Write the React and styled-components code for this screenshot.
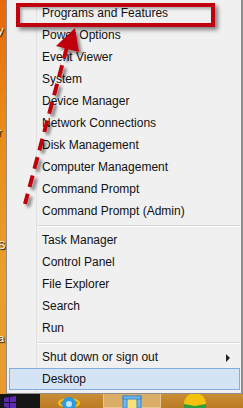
import React from "react";
import styled, { createGlobalStyle } from "styled-components";

const GlobalStyle = createGlobalStyle`
  html, body {
    margin: 0;
    padding: 0;
    background: #c88a2e;
  }
  * {
    box-sizing: border-box;
  }
`;

const groups = [
  [
    "Programs and Features",
    "Power Options",
    "Event Viewer",
    "System",
    "Device Manager",
    "Network Connections",
    "Disk Management",
    "Computer Management",
    "Command Prompt",
    "Command Prompt (Admin)",
  ],
  ["Task Manager", "Control Panel", "File Explorer", "Search", "Run"],
];

export default function App() {
  return (
    <>
      <GlobalStyle />
      <Screen>
        <Desk>
          <Wallpaper>
            <Label style={{ top: 24 }}>y</Label>
            <Label style={{ top: 126 }}>r</Label>
            <Label style={{ top: 239 }}>S</Label>
            <Label style={{ top: 332 }}>a</Label>
          </Wallpaper>
          <Menu>
            {groups.map((items, gi) => (
              <React.Fragment key={gi}>
                {items.map((item) => (
                  <Item key={item}>{item}</Item>
                ))}
                <Separator />
              </React.Fragment>
            ))}
            <Item>
              Shut down or sign out
              <SubArrow />
            </Item>
            <Item $active>Desktop</Item>
          </Menu>
          <Highlight />
          <Annotation width="243" height="394" viewBox="0 0 243 394">
            <defs>
              <filter id="shadow" x="-20%" y="-20%" width="140%" height="140%">
                <feDropShadow dx="3" dy="3" stdDeviation="1.6" floodColor="#000" floodOpacity="0.45" />
              </filter>
            </defs>
            <g filter="url(#shadow)" fill="#c0000f" stroke="#c0000f">
              <line
                x1="67"
                y1="47"
                x2="25"
                y2="204"
                strokeWidth="4"
                strokeDasharray="12 7"
                fill="none"
              />
              <polygon points="75,28 56,46 79,52" stroke="none" />
            </g>
          </Annotation>
        </Desk>
        <Taskbar>
          <StartTile>
            <svg width="14" height="14" viewBox="0 0 14 14">
              <path d="M2 3 L7 2 L7 7 L2 7 Z M8 2 L14 1 L14 7 L8 7 Z M2 8 L7 8 L7 13 L2 12 Z M8 8 L14 8 L14 14 L8 13 Z" fill="#5a2bb0" />
            </svg>
          </StartTile>
          <TaskIcon $x={18}>
            <svg width="22" height="14" viewBox="0 0 22 14">
              <ellipse cx="11" cy="9" rx="10" ry="4" fill="none" stroke="#f5c21a" strokeWidth="2" />
              <circle cx="11" cy="10" r="7" fill="#2a9be0" />
              <circle cx="11" cy="10" r="3" fill="#bfe6fb" />
            </svg>
          </TaskIcon>
          <TaskButton>
            <svg width="22" height="14" viewBox="0 0 22 14">
              <rect x="2" y="2" width="18" height="12" fill="#f7e27a" />
              <rect x="2" y="2" width="4" height="12" fill="#6fb7ec" stroke="#3a86cc" />
              <rect x="16" y="2" width="4" height="12" fill="#6fb7ec" stroke="#3a86cc" />
              <rect x="2" y="2" width="18" height="3" fill="#6fb7ec" stroke="#3a86cc" />
            </svg>
          </TaskButton>
          <TaskIcon $x={20}>
            <svg width="28" height="14" viewBox="0 0 28 14">
              <circle cx="14" cy="12" r="11" fill="#2f9d3a" />
              <path d="M3 10 A11 11 0 0 1 25 10 L14 12 Z" fill="#f4c20d" />
            </svg>
          </TaskIcon>
        </Taskbar>
      </Screen>
    </>
  );
}

const Screen = styled.div`
  width: 243px;
  height: 408px;
  overflow: hidden;
  display: flex;
  flex-direction: column;
  font-family: "Liberation Sans", Arial, sans-serif;
`;

const Desk = styled.div`
  position: relative;
  height: 394px;
  display: flex;
`;

const Wallpaper = styled.div`
  position: relative;
  width: 6px;
  flex-shrink: 0;
  background: linear-gradient(180deg, #e7680c 0%, #e98a17 30%, #ea9e2c 70%, #e89a30 100%);
`;

const Label = styled.span`
  position: absolute;
  left: -2px;
  font-size: 11px;
  color: #fff;
  text-shadow: 1px 1px 1px #000;
`;

const Menu = styled.div`
  position: relative;
  flex: 1;
  background: #f0f0f0;
  border: 1px solid #8c8c8c;
  border-top: none;
  border-right-width: 2px;
  padding: 2px 1px 2px 2px;
  display: flex;
  flex-direction: column;
  &::before {
    content: "";
    position: absolute;
    top: 0;
    bottom: 0;
    left: 29px;
    width: 1px;
    background: #e2e2e2;
  }
`;

const Item = styled.div`
  position: relative;
  height: 22px;
  display: flex;
  align-items: center;
  padding-left: 32px;
  font-size: 12px;
  color: #111;
  background: ${(p) => (p.$active ? "#d5e4f4" : "transparent")};
  border: 1px solid ${(p) => (p.$active ? "#85acdc" : "transparent")};
`;

const SubArrow = styled.span`
  position: absolute;
  right: 9px;
  top: 7px;
  border-left: 4px solid #222;
  border-top: 4px solid transparent;
  border-bottom: 4px solid transparent;
`;

const Separator = styled.div`
  height: 7px;
  margin-left: 29px;
  display: flex;
  align-items: center;
  &::after {
    content: "";
    flex: 1;
    height: 1px;
    background: #d6d6d6;
    box-shadow: 0 1px 0 #fff;
  }
`;

const Highlight = styled.div`
  position: absolute;
  left: 16px;
  top: 3px;
  width: 199px;
  height: 24px;
  border: 4px solid #c0000f;
  box-shadow: 3px 3px 4px rgba(0, 0, 0, 0.45), inset 2px 2px 3px rgba(0, 0, 0, 0.3);
`;

const Annotation = styled.svg`
  position: absolute;
  left: 0;
  top: 0;
  pointer-events: none;
`;

const Taskbar = styled.div`
  height: 14px;
  display: flex;
  align-items: flex-start;
  background: linear-gradient(180deg, #c98e36, #b97a22);
`;

const StartTile = styled.div`
  width: 40px;
  height: 14px;
  background: #151515;
  display: flex;
  align-items: flex-start;
  padding-left: 2px;
  padding-top: 1px;
`;

const TaskIcon = styled.div`
  margin-left: ${(p) => p.$x}px;
  height: 14px;
`;

const TaskButton = styled.div`
  margin-left: 23px;
  width: 58px;
  height: 14px;
  display: flex;
  justify-content: center;
  background: #dbae68;
  border: 1px solid #e6c48e;
  border-top: none;
`;
